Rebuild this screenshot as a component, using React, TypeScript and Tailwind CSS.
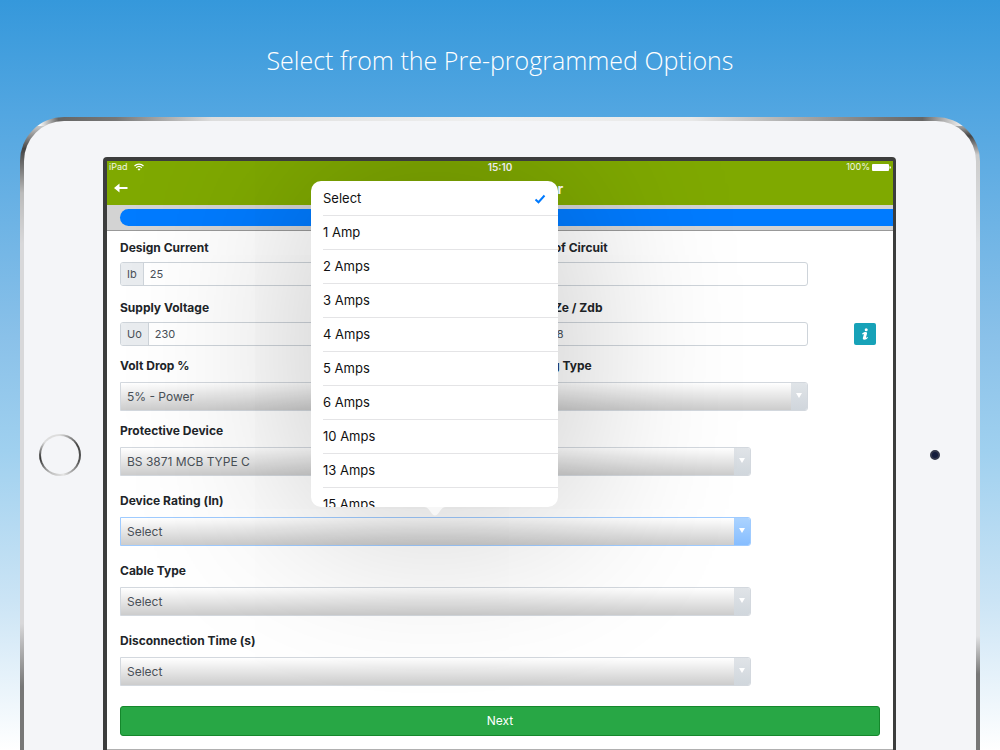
import type { ReactNode } from "react";

const font = "font-['Inter','Liberation_Sans',sans-serif]";

const ratings = ["Select", "1 Amp", "2 Amps", "3 Amps", "4 Amps", "5 Amps", "6 Amps", "10 Amps", "13 Amps", "15 Amps"];

function TextField({ id, label, unit, value, extra }: { id: string; label: string; unit?: string; value: string; extra?: ReactNode }) {
  return (
    <div>
      <label htmlFor={id} className="mb-1 block text-[12px] leading-5 font-bold text-[#212529]">{label}</label>
      <div className="flex h-6">
        <div className="flex min-w-0 flex-1 overflow-hidden rounded-[3px] border border-[#ced4da]">
          {unit && (
            <span className="flex items-center border-r border-[#ced4da] bg-[#e9ecef] px-1.5 text-[11px] text-[#495057]">{unit}</span>
          )}
          <input id={id} defaultValue={value} className="min-w-0 flex-1 bg-transparent px-1.5 text-[11px] text-[#495057] outline-none" />
        </div>
        <div className="flex w-[72px] items-center justify-end pr-1">{extra}</div>
      </div>
    </div>
  );
}

function SelectField({ id, label, value, active = false }: { id: string; label: string; value: string; active?: boolean }) {
  return (
    <div>
      <label htmlFor={id} className="mb-1.5 block text-[12px] leading-5 font-bold text-[#212529]">{label}</label>
      <div className={`flex h-[29px] overflow-hidden rounded-r-[3px] border ${active ? "border-[#9fcbff]" : "border-[#d3d8de]"}`}>
        <select
          id={id}
          defaultValue={value}
          className="min-w-0 flex-1 appearance-none bg-linear-to-b from-black/0 to-black/20 px-1.5 text-[12px] text-[#495057] outline-none"
        >
          <option>{value}</option>
        </select>
        <span
          className={`flex w-4 items-center justify-center bg-linear-to-b pb-0.5 ${active ? "from-[#abd3ff] to-[#86bdff]" : "from-[#e0e4e8] to-[#d0d6dc]"}`}
        >
          <svg viewBox="0 0 6 5" className="h-[5px] w-1.5" aria-hidden="true">
            <path d="M0 0h6L3 5z" fill="#fff" />
          </svg>
        </span>
      </div>
    </div>
  );
}

function StatusBar() {
  return (
    <div className="grid h-2.5 grid-cols-3 items-center px-0.5 text-[9px] leading-3 text-white">
      <div className="flex items-center gap-1.5 text-white/90">
        iPad
        <svg viewBox="0 0 20 15" className="h-2 w-2.5" fill="none" stroke="#fff" strokeWidth="2.4" aria-hidden="true">
          <path d="M1 5.5c5-5 13-5 18 0" />
          <path d="M4.4 9c3.2-3.2 8-3.2 11.200 0" />
          <path d="M7 11.500c1.800-1.600 4.200-1.600 6 0L10 14.800z" fill="#fff" stroke="none" />
        </svg>
      </div>
      <div className="text-center text-[10px] font-semibold">15:10</div>
      <div className="flex items-center justify-end gap-0.5 text-white/90">
        100%
        <svg viewBox="0 0 19 7" className="h-[7px] w-[19px]" aria-hidden="true">
          <rect width="17" height="7" rx="1" fill="#fff" />
          <path d="M17.500 2.200q1.500 0 1.500 1.300t-1.500 1.300z" fill="#fff" />
        </svg>
      </div>
    </div>
  );
}

function RatingPopover() {
  return (
    <div className="absolute top-[20px] left-[204px] w-[247px]">
      <ul role="listbox" aria-label="Device rating options" className="h-[326px] overflow-hidden rounded-[10px] bg-white pt-px shadow-[0_4px_170px_20px_rgba(0,0,0,0.2)]">
        {ratings.map((r, i) => (
          <li key={r} role="option" aria-selected={i === 0} className="pl-3">
            <button type="button" className="flex h-[34px] w-full items-center justify-between border-b border-[#e4e4e6] pr-3 text-left text-[13px] text-[#111]">
              {r}
              {i === 0 && (
                <svg viewBox="0 0 12 10" className="h-2.5 w-3" fill="none" stroke="#007aff" strokeWidth="2" aria-hidden="true">
                  <path d="M1.500 5.400l3 2.800L10.500 1.500" />
                </svg>
              )}
            </button>
          </li>
        ))}
      </ul>
      <svg viewBox="0 0 22 10" className="mx-auto block h-2.5 w-[22px]" aria-hidden="true">
        <path d="M0 0h22c-3 0-4 1.500-6 4-4 6-6 6-10 0C4 1.500 3 0 0 0z" fill="#f7f7f7" />
      </svg>
    </div>
  );
}

function Calculator() {
  return (
    <div className={`relative min-h-0 flex-1 overflow-hidden bg-white ${font}`}>
      <header className="h-11 bg-[#7fa900] text-white">
        <StatusBar />
        <div className="grid h-[34px] grid-cols-[40px_1fr_40px] items-center">
          <button type="button" aria-label="Back" className="flex pl-[7px]">
            <svg viewBox="0 0 14 10" className="h-2.5 w-3.5" aria-hidden="true">
              <path d="M0 5L5.500 0.500V4H13.500V6H5.500V9.500z" fill="#fff" />
            </svg>
          </button>
          <h1 className="text-center text-[14px] font-bold">Voltage Calculator</h1>
        </div>
      </header>
      <div className="h-[26px] border-b border-[#999] bg-[#d3d3d3] pt-1 pl-[13px]">
        <div role="progressbar" aria-label="Progress" className="h-[17px] rounded-l-full bg-[#007bff]" />
      </div>
      <form className="px-[13px] pt-[7px]">
        <div className="grid grid-cols-2 gap-x-5 gap-y-3">
          <TextField id="current" label="Design Current" unit="Ib" value="25" />
          <TextField id="length" label="Length of Circuit" value="" />
          <TextField id="voltage" label="Supply Voltage" unit="Uo" value="230" />
          <TextField
            id="ze"
            label="Supply Ze / Zdb"
            unit="Ze"
            value="0.18"
            extra={
              <button type="button" aria-label="Information" className="flex size-[22px] items-center justify-center rounded-[2px] bg-[#17a2b8]">
                <svg viewBox="0 0 8 12" className="h-3 w-2" fill="#fff" aria-hidden="true">
                  <circle cx="5.200" cy="1.700" r="1.500" />
                  <path d="M1 5.800C2 4.400 3.300 3.900 4.600 3.900 6 3.900 6.300 4.700 6 5.800L5 9.300C4.900 9.900 5.400 9.800 6.500 8.900L7 9.600C5.900 11.200 4.700 11.800 3.400 11.800 2 11.800 1.600 10.900 1.900 9.800L2.900 6.300C3.100 5.700 2.600 5.800 1.600 6.600z" />
                </svg>
              </button>
            }
          />
        </div>
        <div className="mt-2.5 grid grid-cols-2 gap-x-5">
          <div className="pr-[72px]">
            <SelectField id="drop" label="Volt Drop %" value="5% - Power" />
          </div>
          <div className="pr-[72px]">
            <SelectField id="earthing" label="Earthing Type" value="" />
          </div>
        </div>
        <div className="mt-2.5 flex w-[83%] flex-col gap-[15px]">
          <SelectField id="device" label="Protective Device" value="BS 3871 MCB TYPE C" />
          <SelectField id="rating" label="Device Rating (In)" value="Select" active />
          <SelectField id="cable" label="Cable Type" value="Select" />
          <SelectField id="time" label="Disconnection Time (s)" value="Select" />
        </div>
        <button type="button" className="mt-5 h-[30px] w-full rounded-[3px] border border-[#15872c] bg-[#28a745] text-[12px] text-white">
          Next
        </button>
      </form>
      <div className="mt-[13px] border-t border-[#b0b0b0]" />
      <RatingPopover />
    </div>
  );
}

export default function App() {
  return (
    <main className="flex h-screen flex-col overflow-hidden bg-[linear-gradient(180deg,#3598db_0%,#52a6e1_15%,#8ac1e9_45%,#9fd0ef_60%,#cbe4f5_80%,#ffffff_100%)]">
      <h2 className="pt-[42px] text-center font-['Open_Sans',sans-serif] text-[25px] leading-9 font-light text-white">
        Select from the Pre-programmed Options
      </h2>
      <div className="mx-5 mt-[39px] flex min-h-0 flex-1 rounded-t-[44px] bg-[linear-gradient(90deg,#fff_0,#fff_2%,#666_4%,#777_10%,#ddd_20%,#f0f0f0_50%,#e8e8e8_70%,#777_90%,#666_94%,#eee_98%),linear-gradient(180deg,#fff_0,#444_5%,#bbb_12%,#d8d8da_20%,#d8d8da_80%,#777_90%,#777_100%),linear-gradient(180deg,#fff_0,#444_3%,#ccc_6%,#e2e3e5_20%,#e2e3e5_82%,#777_88%,#777_100%)] bg-[length:100%_9px,50%_100%,50%_100%] bg-[position:0_0,0_0,100%_0] bg-no-repeat px-1 pt-1">
        <div className="grid min-h-0 flex-1 grid-cols-[79px_minmax(0,1fr)_80px] rounded-t-[40px] bg-[#f4f5f8]">
          <div className="flex justify-center pt-[313px] pr-2">
            <button type="button" aria-label="Home" className="size-[42px] rounded-full bg-[conic-gradient(#ddd,#444_60deg,#555_110deg,#e5e5e5_170deg,#bbb_210deg,#333_260deg,#ddd_310deg,#ddd)] p-0.5">
              <span className="block size-full rounded-full bg-[#f4f5f8]" />
            </button>
          </div>
          <div className="flex min-h-0 pt-9">
            <div className="flex min-w-0 flex-1 rounded-t-[4px] bg-[#3c3d3d] pt-1 pr-[3px] pl-1">
              <Calculator />
            </div>
          </div>
          <div className="flex justify-center pt-[329px] pr-0.5">
            <span className="size-2.5 rounded-full border-2 border-[#33364a] bg-[#141b3c]" />
          </div>
        </div>
      </div>
    </main>
  );
}
